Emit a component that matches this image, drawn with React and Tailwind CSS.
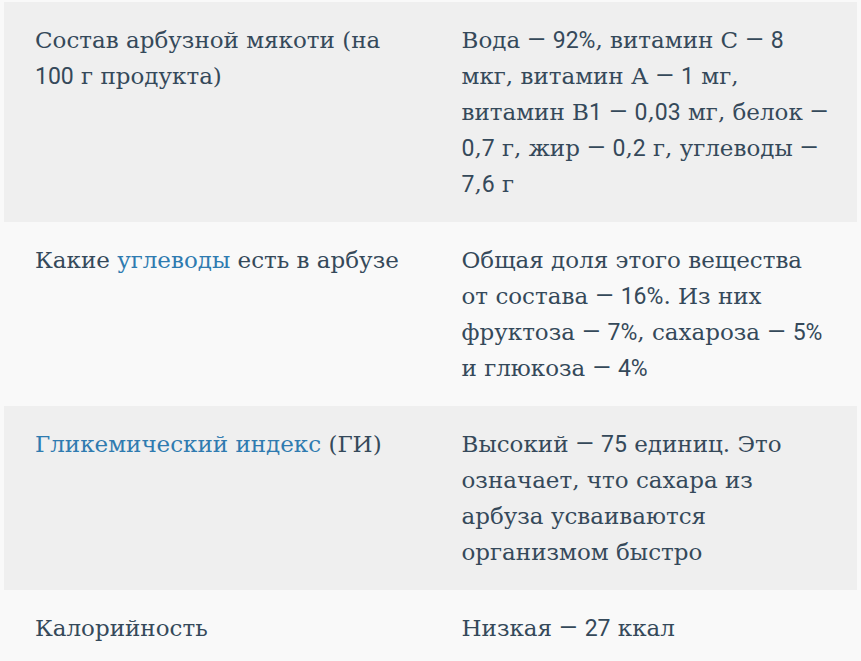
const LINK = "text-[#2f7bb0]";

function fmt(str) {
  if (typeof str !== "string") return str;
  return str.split(/([0-9%—]+)/).map((part, i) =>
    /^[0-9%—]+$/.test(part) ? (
      <span key={i} className="font-['Roboto'] leading-none">{part}</span>
    ) : (
      part
    )
  );
}

function Cell({ lines }) {
  return (
    <div className="py-[20px] pl-[31px] pr-[10px]">
      {lines.map((l, i) => (
        <div key={i} className="whitespace-nowrap h-[36px]">{fmt(l)}</div>
      ))}
    </div>
  );
}

export default function App() {
  const rows = [
    {
      gray: true,
      left: ["Состав арбузной мякоти (на", "100 г продукта)"],
      right: [
        "Вода — 92%, витамин С — 8",
        "мкг, витамин А — 1 мг,",
        "витамин В1 — 0,03 мг, белок —",
        "0,7 г, жир — 0,2 г, углеводы —",
        "7,6 г",
      ],
    },
    {
      gray: false,
      left: [<>Какие <span className={LINK}>углеводы</span> есть в арбузе</>],
      right: [
        "Общая доля этого вещества",
        "от состава — 16%. Из них",
        "фруктоза — 7%, сахароза — 5%",
        "и глюкоза — 4%",
      ],
    },
    {
      gray: true,
      left: [<><span className={LINK}>Гликемический индекс</span> (ГИ)</>],
      right: [
        "Высокий — 75 единиц. Это",
        "означает, что сахара из",
        "арбуза усваиваются",
        "организмом быстро",
      ],
    },
    {
      gray: false,
      left: ["Калорийность"],
      right: ["Низкая — 27 ккал"],
    },
  ];
  return (
    <div className="min-h-screen bg-[#f9f9f9] pt-[2px] pl-[4px] text-[#35495a] text-[23px] leading-[36px]" style={{ fontFamily: '"DejaVu Serif", serif' }}>
      <div className="w-[853px]">
        {rows.map((r, i) => (
          <div key={i} className={`grid grid-cols-2 ${r.gray ? "bg-[#efefef]" : ""}`}>
            <Cell lines={r.left} />
            <Cell lines={r.right} />
          </div>
        ))}
      </div>
    </div>
  );
}
